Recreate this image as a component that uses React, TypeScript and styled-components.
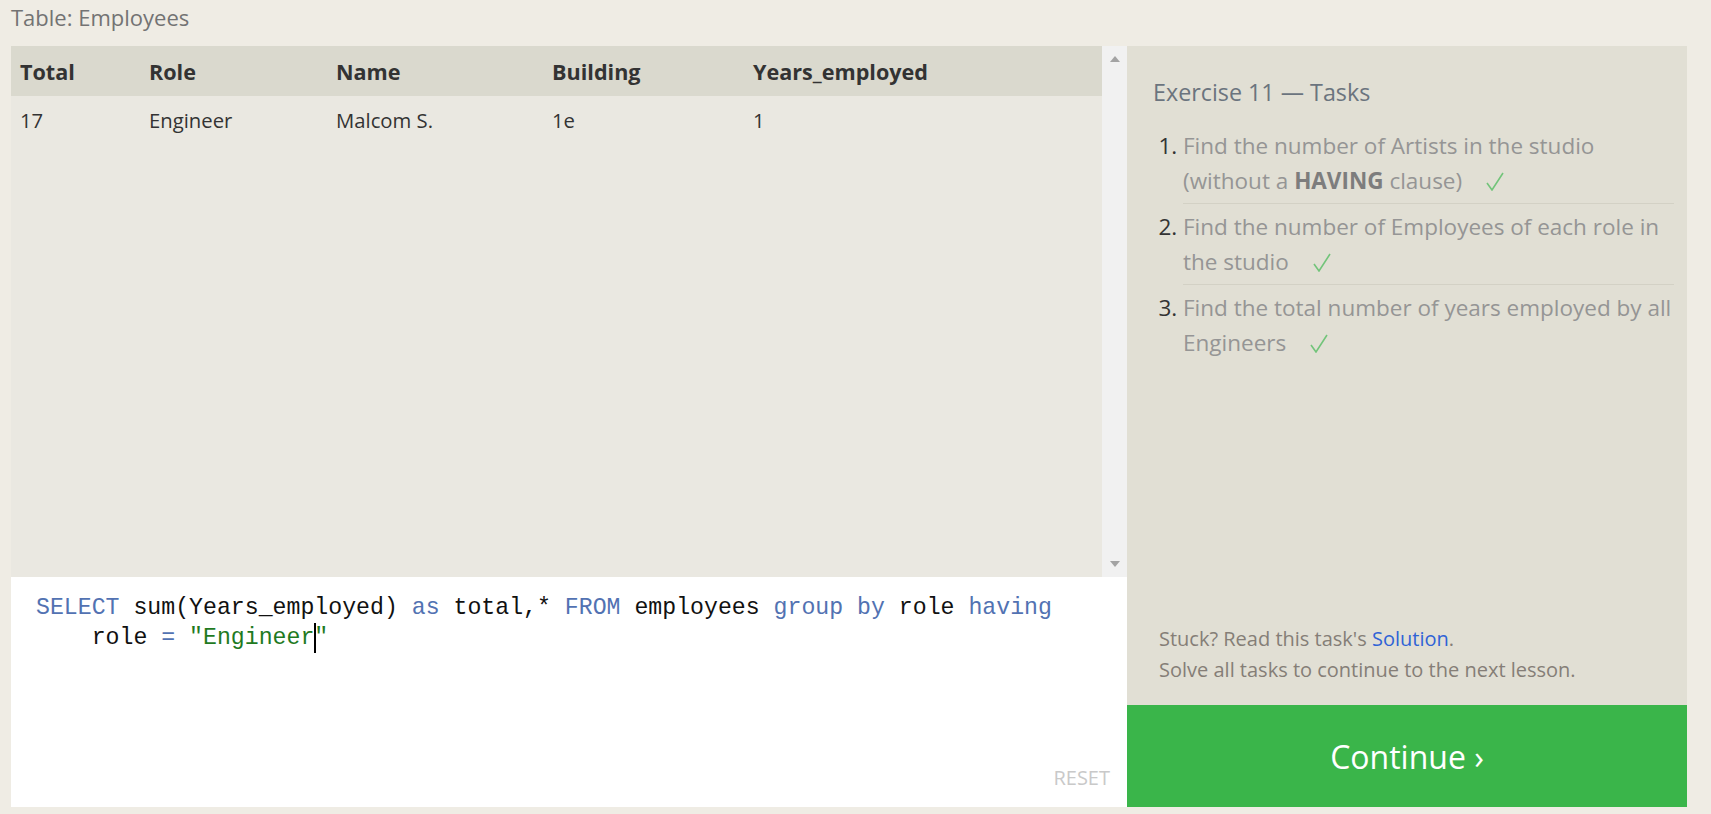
import styled, { createGlobalStyle } from "styled-components";

const GlobalStyle = createGlobalStyle`
  body {
    margin: 0;
    background: #efece4;
    font-family: "Open Sans", "Noto Sans", sans-serif;
    color: #333;
  }
`;

const COLORS = {
  page: "#efece4",
  tableHeader: "#dad9ce",
  tableBody: "#eae8e1",
  panel: "#e1dfd4",
  keyword: "#5272b2",
  string: "#1f7a1f",
  green: "#3ab54a",
};

const Page = styled.div`
  width: 1711px;
  height: 814px;
  overflow: hidden;
`;

const TitleBar = styled.div`
  height: 46px;
  padding-left: 11px;
  font-size: 22px;
  line-height: 34px;
  color: #737373;
`;

const Main = styled.div`
  display: flex;
  height: 761px;
  padding: 0 24px 0 11px;
`;

const LeftColumn = styled.div`
  display: flex;
  flex-direction: column;
  width: 1116px;
`;

const TableArea = styled.div`
  display: flex;
  height: 531px;
`;

const TableScroll = styled.div`
  flex: 1;
  background: ${COLORS.tableBody};
`;

const Row = styled.div<{ $header?: boolean }>`
  display: grid;
  grid-template-columns: 129px 187px 216px 201px 1fr;
  align-items: center;
  height: ${(p) => (p.$header ? "50px" : "48px")};
  background: ${(p) => (p.$header ? COLORS.tableHeader : "transparent")};
  font-size: ${(p) => (p.$header ? "21.6px" : "20.3px")};
  font-weight: ${(p) => (p.$header ? 700 : 400)};
  color: #333;
`;

const Cell = styled.div`
  padding-left: 9px;
  white-space: nowrap;
`;

const Scrollbar = styled.div`
  width: 25px;
  background: #f1f1f1;
  display: flex;
  flex-direction: column;
  justify-content: space-between;
  align-items: center;
  padding: 10px 0;
  box-sizing: border-box;
`;

const Arrow = styled.span<{ $down?: boolean }>`
  width: 0;
  height: 0;
  border-left: 5.5px solid transparent;
  border-right: 5.5px solid transparent;
  ${(p) =>
    p.$down
      ? "border-top: 6px solid #a3a3a3;"
      : "border-bottom: 6px solid #a3a3a3;"}
`;

const Editor = styled.div`
  flex: 1;
  display: flex;
  flex-direction: column;
  background: #fff;
`;

const Code = styled.pre`
  flex: 1;
  margin: 0;
  padding: 16px 0 0 25px;
  font-family: "Liberation Mono", "DejaVu Sans Mono", monospace;
  font-size: 23.2px;
  line-height: 30px;
  color: #111;
`;

const Kw = styled.span`
  color: ${COLORS.keyword};
`;

const Str = styled.span`
  color: ${COLORS.string};
`;

const Caret = styled.span`
  display: inline-block;
  width: 2px;
  height: 30px;
  margin-right: -2px;
  background: #000;
  vertical-align: top;
`;

const EditorFooter = styled.div`
  display: flex;
  justify-content: flex-end;
  padding: 0 17px 16px 0;
`;

const ResetButton = styled.span`
  font-size: 20px;
  line-height: 26px;
  color: #c9c9c9;
`;

const TaskPanel = styled.div`
  width: 560px;
  display: flex;
  flex-direction: column;
  background: ${COLORS.panel};
`;

const TaskBody = styled.div`
  flex: 1;
  display: flex;
  flex-direction: column;
  padding: 29px 13px 20px 26px;
`;

const Heading = styled.h2`
  margin: 0 0 14px;
  font-size: 23.3px;
  line-height: 34px;
  font-weight: 400;
  color: #6b747e;
`;

const TaskList = styled.ol`
  margin: 0;
  padding-left: 30px;
`;

const TaskItem = styled.li`
  padding: 5px 0;
  font-size: 22.5px;
  line-height: 35px;
  color: #959595;
  white-space: nowrap;
  border-bottom: 1px solid #d3d1c5;

  &:last-child {
    border-bottom: none;
  }

  &::marker {
    color: #333;
  }

  b {
    color: #7d7d7d;
  }
`;

const Check = styled.svg`
  margin-left: 18px;
  vertical-align: -2px;
`;

const Hint = styled.div`
  margin-top: auto;
  padding-left: 6px;
  font-size: 20px;
  line-height: 31px;
  color: #857e77;

  a {
    color: #2f63d6;
    text-decoration: none;
  }
`;

const ContinueButton = styled.button`
  height: 102px;
  border: none;
  background: ${COLORS.green};
  color: #fff;
  font-family: inherit;
  font-size: 32px;
  display: flex;
  align-items: center;
  justify-content: center;
  padding: 0;
`;

function CheckMark() {
  return (
    <Check width="18" height="19" viewBox="0 0 18 19">
      <polyline
        points="1,11 6,18 17,1"
        fill="none"
        stroke="#72c47a"
        strokeWidth="1.6"
      />
    </Check>
  );
}

const columns = ["Total", "Role", "Name", "Building", "Years_employed"];
const rows = [["17", "Engineer", "Malcom S.", "1e", "1"]];

export default function App() {
  return (
    <Page>
      <GlobalStyle />
      <TitleBar>Table: Employees</TitleBar>
      <Main>
        <LeftColumn>
          <TableArea>
            <TableScroll>
              <Row $header>
                {columns.map((c) => (
                  <Cell key={c}>{c}</Cell>
                ))}
              </Row>
              {rows.map((r, i) => (
                <Row key={i}>
                  {r.map((v, j) => (
                    <Cell key={j}>{v}</Cell>
                  ))}
                </Row>
              ))}
            </TableScroll>
            <Scrollbar>
              <Arrow />
              <Arrow $down />
            </Scrollbar>
          </TableArea>
          <Editor>
            <Code>
              <Kw>SELECT</Kw> sum(Years_employed) <Kw>as</Kw> total,*{" "}
              <Kw>FROM</Kw> employees <Kw>group</Kw> <Kw>by</Kw> role{" "}
              <Kw>having</Kw>
              {"\n    "}role <Kw>=</Kw> <Str>"Engineer</Str>
              <Caret />
              <Str>"</Str>
            </Code>
            <EditorFooter>
              <ResetButton>RESET</ResetButton>
            </EditorFooter>
          </Editor>
        </LeftColumn>
        <TaskPanel>
          <TaskBody>
            <Heading>Exercise 11 — Tasks</Heading>
            <TaskList>
              <TaskItem>
                Find the number of Artists in the studio
                <br />
                (without a <b>HAVING</b> clause) <CheckMark />
              </TaskItem>
              <TaskItem>
                Find the number of Employees of each role in
                <br />
                the studio <CheckMark />
              </TaskItem>
              <TaskItem>
                Find the total number of years employed by all
                <br />
                Engineers <CheckMark />
              </TaskItem>
            </TaskList>
            <Hint>
              Stuck? Read this task's <a href="#">Solution</a>.
              <br />
              Solve all tasks to continue to the next lesson.
            </Hint>
          </TaskBody>
          <ContinueButton>Continue ›</ContinueButton>
        </TaskPanel>
      </Main>
    </Page>
  );
}
